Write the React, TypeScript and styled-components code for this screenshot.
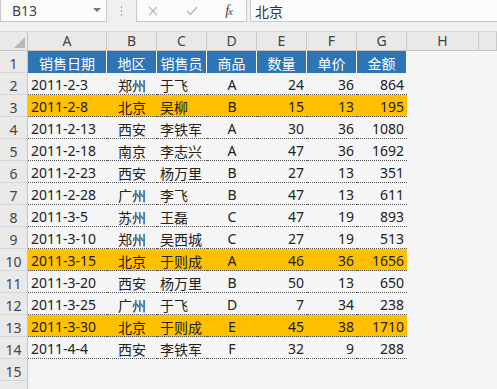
import styled, { createGlobalStyle } from "styled-components";

type Row = {
  date: string;
  region: string;
  seller: string;
  product: string;
  qty: number;
  price: number;
  amount: number;
  highlight?: boolean;
};

const GlobalStyle = createGlobalStyle`
  html, body {
    margin: 0;
    padding: 0;
    background: #f5f5f5;
    overflow: hidden;
  }
  body {
    font-family: "Noto Sans", "Noto Sans CJK SC", sans-serif;
    color: #222;
  }
  * {
    box-sizing: border-box;
  }
`;

const Page = styled.div`
  width: 497px;
  height: 389px;
  display: flex;
  flex-direction: column;
  overflow: hidden;
  background: #f5f5f5;
`;

const TopBar = styled.div`
  height: 32px;
  flex-shrink: 0;
  display: flex;
  align-items: flex-start;
  background: #f0f0f0;
  border-bottom: 1px solid #dadada;
`;

const NameBox = styled.div`
  width: 107px;
  height: 22px;
  display: flex;
  align-items: center;
  justify-content: space-between;
  padding: 0 5px 0 11px;
  background: #fbfbfb;
  border: 1px solid #c9c9c9;
  border-top: none;
  color: #444;
  font-size: 14px;
`;

const DropArrow = styled.span`
  width: 0;
  height: 0;
  border-left: 4px solid transparent;
  border-right: 4px solid transparent;
  border-top: 4px solid #777;
  margin-top: -2px;
`;

const Dots = styled.div`
  width: 29px;
  height: 22px;
  display: flex;
  align-items: center;
  justify-content: center;
`;

const FxGroup = styled.div`
  width: 111px;
  height: 22px;
  display: flex;
  align-items: center;
  justify-content: space-between;
  padding: 0 14px 0 11px;
  background: #fbfbfb;
  border: 1px solid #c9c9c9;
  border-top: none;
`;

const FxLabel = styled.span`
  font-family: "Liberation Serif", serif;
  font-style: italic;
  font-size: 14px;
  color: #444;
  letter-spacing: -1px;

  small {
    font-size: 11px;
  }
`;

const FormulaInput = styled.div`
  flex: 1;
  height: 22px;
  margin-left: 3px;
  padding-left: 4px;
  display: flex;
  align-items: center;
  background: #fbfbfb;
  border-left: 1px solid #c9c9c9;
  border-bottom: 1px solid #c9c9c9;
  color: #333;
  font-size: 14px;
`;

const Sheet = styled.div`
  display: grid;
  grid-template-columns: 28px 79px repeat(6, 50px) 72px 1fr;
  grid-template-rows: 19px;
  grid-auto-rows: 22px;
  font-size: 14px;
`;

const Corner = styled.div`
  background: #e9e9e9;
  border-right: 1px solid #c4c4c4;
  border-bottom: 1px solid #c4c4c4;
  display: flex;
  align-items: flex-end;
  justify-content: flex-end;
  padding: 0 2px 2px 0;
`;

const ColHead = styled.div`
  background: #e9e9e9;
  border-right: 1px solid #c9c9c9;
  border-bottom: 1px solid #c4c4c4;
  display: flex;
  align-items: center;
  justify-content: center;
  color: #444;
  font-size: 14px;
  line-height: 1;
`;

const RowHead = styled.div`
  background: #e9e9e9;
  border-right: 1px solid #c4c4c4;
  border-bottom: 1px solid #d6d6d6;
  display: flex;
  align-items: center;
  justify-content: center;
  padding-top: 3px;
  color: #444;
  font-size: 14px;
`;

type CellProps = {
  $align?: "left" | "center" | "right";
  $kind?: "head" | "hl" | "plain" | "empty";
};

const Cell = styled.div<CellProps>`
  display: flex;
  align-items: center;
  padding: 2px 3px 0;
  white-space: nowrap;
  justify-content: ${(p) =>
    p.$align === "right" ? "flex-end" : p.$align === "center" ? "center" : "flex-start"};
  background: ${(p) =>
    p.$kind === "head" ? "#2e75b6" : p.$kind === "hl" ? "#ffc000" : "transparent"};
  color: ${(p) => (p.$kind === "head" ? "#fff" : "#222")};
  border-right: ${(p) => (p.$kind === "head" ? "1px solid #fff" : "none")};
  border-bottom: ${(p) =>
    p.$kind === "head" || p.$kind === "empty" ? "none" : "1px dotted #555"};
`;

const rows: Row[] = [
  { date: "2011-2-3", region: "郑州", seller: "于飞", product: "A", qty: 24, price: 36, amount: 864 },
  { date: "2011-2-8", region: "北京", seller: "吴柳", product: "B", qty: 15, price: 13, amount: 195, highlight: true },
  { date: "2011-2-13", region: "西安", seller: "李铁军", product: "A", qty: 30, price: 36, amount: 1080 },
  { date: "2011-2-18", region: "南京", seller: "李志兴", product: "A", qty: 47, price: 36, amount: 1692 },
  { date: "2011-2-23", region: "西安", seller: "杨万里", product: "B", qty: 27, price: 13, amount: 351 },
  { date: "2011-2-28", region: "广州", seller: "李飞", product: "B", qty: 47, price: 13, amount: 611 },
  { date: "2011-3-5", region: "苏州", seller: "王磊", product: "C", qty: 47, price: 19, amount: 893 },
  { date: "2011-3-10", region: "郑州", seller: "吴西城", product: "C", qty: 27, price: 19, amount: 513 },
  { date: "2011-3-15", region: "北京", seller: "于则成", product: "A", qty: 46, price: 36, amount: 1656, highlight: true },
  { date: "2011-3-20", region: "西安", seller: "杨万里", product: "B", qty: 50, price: 13, amount: 650 },
  { date: "2011-3-25", region: "广州", seller: "于飞", product: "D", qty: 7, price: 34, amount: 238 },
  { date: "2011-3-30", region: "北京", seller: "于则成", product: "E", qty: 45, price: 38, amount: 1710, highlight: true },
  { date: "2011-4-4", region: "西安", seller: "李铁军", product: "F", qty: 32, price: 9, amount: 288 },
];

const headers = ["销售日期", "地区", "销售员", "商品", "数量", "单价", "金额"];
const letters = ["A", "B", "C", "D", "E", "F", "G", "H", ""];

export default function App() {
  return (
    <Page>
      <GlobalStyle />
      <TopBar>
        <NameBox>
          B13
          <DropArrow />
        </NameBox>
        <Dots>
          <svg width="3" height="13" viewBox="0 0 3 13">
            <rect x="1" y="1" width="1" height="2" fill="#a8a8a8" />
            <rect x="1" y="5" width="1" height="2" fill="#a8a8a8" />
            <rect x="1" y="9" width="1" height="2" fill="#a8a8a8" />
          </svg>
        </Dots>
        <FxGroup>
          <svg width="10" height="10" viewBox="0 0 10 10">
            <path d="M1 1 L9 9 M9 1 L1 9" stroke="#b8b8b8" strokeWidth="1.2" fill="none" />
          </svg>
          <svg width="12" height="10" viewBox="0 0 12 10">
            <path d="M1 5 L4.5 8.5 L11 1" stroke="#b8b8b8" strokeWidth="1.3" fill="none" />
          </svg>
          <FxLabel>
            f<small>x</small>
          </FxLabel>
        </FxGroup>
        <FormulaInput>北京</FormulaInput>
      </TopBar>

      <Sheet>
        <Corner>
          <svg width="11" height="11" viewBox="0 0 11 11">
            <polygon points="11,0 11,11 0,11" fill="#b9b9b9" />
          </svg>
        </Corner>
        {letters.map((l, i) => (
          <ColHead key={i}>{l}</ColHead>
        ))}

        <RowHead>1</RowHead>
        {headers.map((h) => (
          <Cell key={h} $kind="head" $align="center">
            {h}
          </Cell>
        ))}
        <Cell $kind="empty" />
        <Cell $kind="empty" />

        {rows.map((r, i) => {
          const kind = r.highlight ? "hl" : "plain";
          return [
            <RowHead key={`h${i}`}>{i + 2}</RowHead>,
            <Cell key={`a${i}`} $kind={kind}>{r.date}</Cell>,
            <Cell key={`b${i}`} $kind={kind} $align="center">{r.region}</Cell>,
            <Cell key={`c${i}`} $kind={kind}>{r.seller}</Cell>,
            <Cell key={`d${i}`} $kind={kind} $align="center">{r.product}</Cell>,
            <Cell key={`e${i}`} $kind={kind} $align="right">{r.qty}</Cell>,
            <Cell key={`f${i}`} $kind={kind} $align="right">{r.price}</Cell>,
            <Cell key={`g${i}`} $kind={kind} $align="right">{r.amount}</Cell>,
            <Cell key={`x${i}`} $kind="empty" />,
            <Cell key={`y${i}`} $kind="empty" />,
          ];
        })}

        {[15, 16].map((n) => [
          <RowHead key={`h${n}`}>{n}</RowHead>,
          ...Array.from({ length: 9 }, (_, k) => <Cell key={`${n}-${k}`} $kind="empty" />),
        ])}
      </Sheet>
    </Page>
  );
}
